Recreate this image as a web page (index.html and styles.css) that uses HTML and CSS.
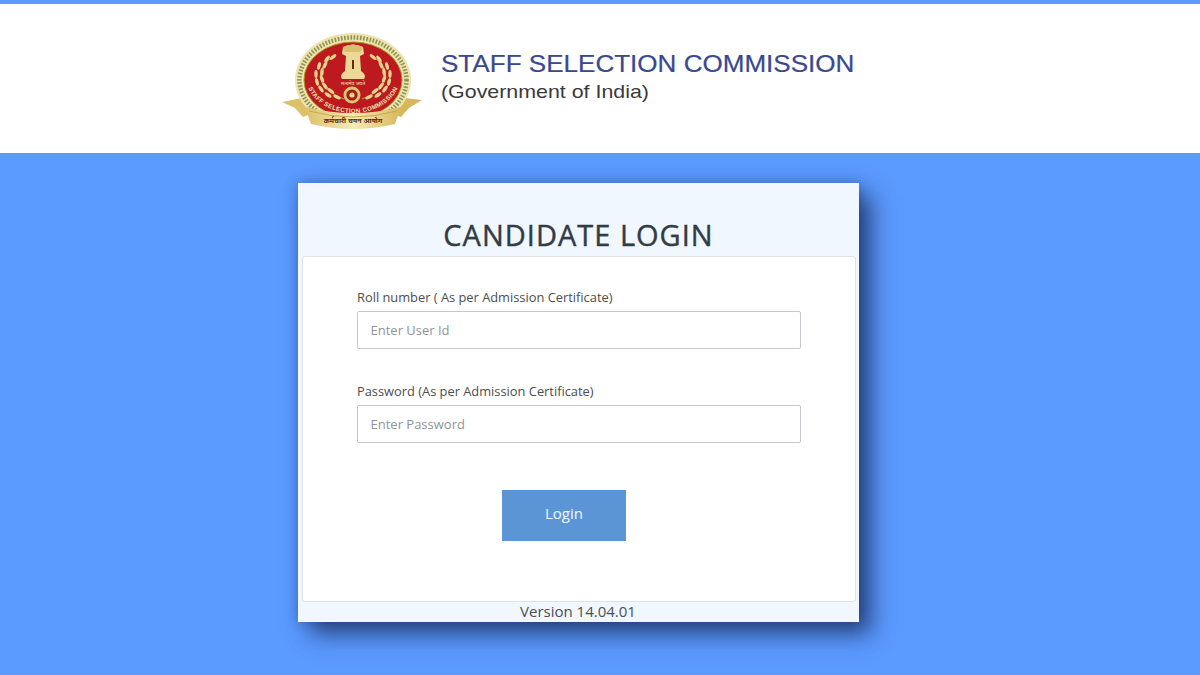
FILE: index.html
```html
<!DOCTYPE html>
<html lang="en">
<head>
<meta charset="utf-8">
<title>Candidate Login</title>
<link rel="stylesheet" href="styles.css">
</head>
<body>
<header class="masthead">
  <svg class="emblem" width="142" height="98" viewBox="0 0 142 98" aria-label="SSC emblem">
    <defs>
      <path id="arcText" d="M25 44 A47 36 0 0 0 119 44" />
      <linearGradient id="gold" x1="0" x2="1" y1="0" y2="0">
        <stop offset="0" stop-color="#dcc06a"/><stop offset=".5" stop-color="#f5eab8"/><stop offset="1" stop-color="#d6b85c"/>
      </linearGradient>
      <g id="wreath">
        <path d="M54 23 C36 32 30 54 63 66" fill="none" stroke="#b8a04a" stroke-width="1"/>
        <ellipse cx="52" cy="24" rx="4" ry="1.7" transform="rotate(-40 52 24)" fill="#e6d48e"/>
        <ellipse cx="46" cy="26" rx="4" ry="1.7" transform="rotate(-55 46 26)" fill="#e6d48e"/>
        <ellipse cx="44" cy="32" rx="4" ry="1.7" transform="rotate(-65 44 32)" fill="#e6d48e"/>
        <ellipse cx="38" cy="33" rx="4" ry="1.7" transform="rotate(-75 38 33)" fill="#e6d48e"/>
        <ellipse cx="41" cy="39" rx="4" ry="1.7" transform="rotate(-85 41 39)" fill="#e6d48e"/>
        <ellipse cx="35" cy="41" rx="4" ry="1.7" transform="rotate(-90 35 41)" fill="#e6d48e"/>
        <ellipse cx="41" cy="46" rx="4" ry="1.7" transform="rotate(70 41 46)" fill="#e6d48e"/>
        <ellipse cx="36" cy="49" rx="4" ry="1.7" transform="rotate(75 36 49)" fill="#e6d48e"/>
        <ellipse cx="44" cy="53" rx="4" ry="1.7" transform="rotate(55 44 53)" fill="#e6d48e"/>
        <ellipse cx="40" cy="56" rx="4" ry="1.7" transform="rotate(55 40 56)" fill="#e6d48e"/>
        <ellipse cx="50" cy="58" rx="4" ry="1.7" transform="rotate(40 50 58)" fill="#e6d48e"/>
        <ellipse cx="47" cy="62" rx="4" ry="1.7" transform="rotate(35 47 62)" fill="#e6d48e"/>
        <ellipse cx="56" cy="64" rx="4" ry="1.7" transform="rotate(25 56 64)" fill="#e6d48e"/>
      </g>
    </defs>
    <path d="M1 69 L26 64 L32 80 L22 84 L14 75 Z" fill="#dcc06a"/>
    <path d="M141 67 L116 64 L110 80 L120 84 L128 75 Z" fill="#d6b85c"/>
    <ellipse cx="72" cy="47" rx="58" ry="47" fill="#efe3ad"/>
    <ellipse cx="72" cy="47" rx="53.5" ry="42.5" fill="none" stroke="#8d9456" stroke-width="4.5" stroke-dasharray="1.6 1.6"/>
    <ellipse cx="72" cy="47" rx="49" ry="38" fill="#bd1a1f" stroke="#a9951e"/>
    <use href="#wreath"/>
    <use href="#wreath" transform="matrix(-1 0 0 1 144 0)"/>
    <path d="M62 14 Q72 9 82 14 L83 21 L79 23 L80 38 Q86 42 83 46 L61 46 Q58 42 64 38 L65 23 L61 21 Z" fill="#ecd998"/>
    <path d="M62 14 Q72 9 82 14 L80 19 L64 19 Z" fill="#d9bf6e"/>
    <rect x="71" y="27" width="2" height="9" fill="#6b2a10"/>
    <text class="emblem-seal" x="72" y="52" text-anchor="middle">सत्यमेव जयते</text>
    <circle cx="71" cy="62" r="8.5" fill="#d9c673"/>
    <circle cx="71" cy="62" r="5.6" fill="#a51a16"/>
    <circle cx="71" cy="62" r="2.6" fill="#e6d48e"/>
    <text class="emblem-arc"><textPath href="#arcText" startOffset="50%" text-anchor="middle">STAFF SELECTION COMMISSION</textPath></text>
    <path d="M24 74 Q72 86 120 74 L114 91 Q72 101 30 91 Z" fill="url(#gold)"/>
    <path d="M28 78 Q72 90 116 78" fill="none" stroke="#c9a94c"/>
    <text class="emblem-motto" x="72" y="90" text-anchor="middle">कर्मचारी चयन आयोग</text>
  </svg>
  <div class="brand">
    <p class="brand-name">STAFF SELECTION COMMISSION</p>
    <p class="brand-sub">(Government of India)</p>
  </div>
</header>
<main class="card">
  <h1 class="card-title">CANDIDATE LOGIN</h1>
  <form class="panel">
    <label class="field-label" for="uid">Roll number ( As per Admission Certificate)</label>
    <input class="field-input" id="uid" type="text" placeholder="Enter User Id">
    <label class="field-label field-label-second" for="pwd">Password (As per Admission Certificate)</label>
    <input class="field-input" id="pwd" type="password" placeholder="Enter Password">
    <button class="login-btn" type="button">Login</button>
  </form>
  <p class="version">Version 14.04.01</p>
</main>
</body>
</html>
```

FILE: styles.css
```css
* { box-sizing: border-box; }
html, body { margin: 0; height: 100%; overflow: hidden; }
body { background: #5b9aff; font-family: "Open Sans", sans-serif; }

.masthead {
  height: 153px;
  background: #fff;
  border-top: 4px solid #5b9aff;
  display: flex;
  align-items: flex-start;
  padding: 29px 0 0 281px;
}
.emblem { flex: none; display: block; }
.emblem-arc { font: bold 6.2px "Liberation Sans", sans-serif; fill: #f3e6b0; letter-spacing: .35px; }
.emblem-seal { font: 5px "Noto Sans", "Liberation Sans", sans-serif; fill: #f3e6b0; }
.emblem-motto { font: bold 7px "Noto Sans", "Liberation Sans", sans-serif; fill: #5a2a10; }

.brand { margin: 16px 0 0 18px; font-family: "Liberation Sans", Arial, sans-serif; }
.brand-name {
  margin: 0;
  font-size: 23.6px;
  line-height: 30px;
  color: #39498f;
  white-space: nowrap;
  -webkit-text-stroke: .2px #39498f;
  transform: scaleX(1.104);
  transform-origin: left center;
}
.brand-sub {
  margin: 0;
  font-size: 19px;
  line-height: 25px;
  color: #3a3a3a;
  white-space: nowrap;
  transform: scaleX(1.125);
  transform-origin: left center;
}

.card {
  width: 561px;
  height: 439px;
  margin: 30px 0 0 298px;
  background: #f0f7fe;
  box-shadow: 12px 12px 22px rgba(22, 38, 80, .72), 0 0 12px rgba(30, 60, 120, .4);
  display: flex;
  flex-direction: column;
}
.card-title {
  margin: 0;
  height: 73px;
  padding-top: 32px;
  text-align: center;
  font-size: 29px;
  line-height: 40px;
  font-weight: 400;
  letter-spacing: 1px;
  -webkit-text-stroke: .4px #333b45;
  color: #333b45;
}
.panel {
  width: 554px;
  height: 346px;
  margin-left: 4px;
  background: #fff;
  border: 1px solid #dfe3e8;
  border-radius: 3px;
  padding: 31px 0 0 54px;
  display: flex;
  flex-direction: column;
  align-items: flex-start;
}
.field-label { font-size: 12.85px; line-height: 18px; color: #4d4d4d; margin-bottom: 5px; }
.field-label-second { margin-top: 33px; }
.field-input {
  width: 444px;
  height: 38px;
  border: 1px solid #c4c8cc;
  border-radius: 2px;
  padding: 0 12.5px;
  font: 13px "Open Sans", sans-serif;
  color: #444;
  background: #fff;
}
.field-input::placeholder { color: #8f9499; opacity: 1; }
.login-btn {
  width: 124px;
  height: 51px;
  margin: 47px 0 0 145px;
  padding: 0 0 5px;
  border: 0;
  background: #5b95d6;
  color: #f2f8ff;
  font: 15px "Open Sans", sans-serif;
}
.version {
  margin: 0;
  padding-right: 1px;
  height: 20px;
  text-align: center;
  font-size: 15px;
  line-height: 18px;
  color: #4a4f55;
}
```
